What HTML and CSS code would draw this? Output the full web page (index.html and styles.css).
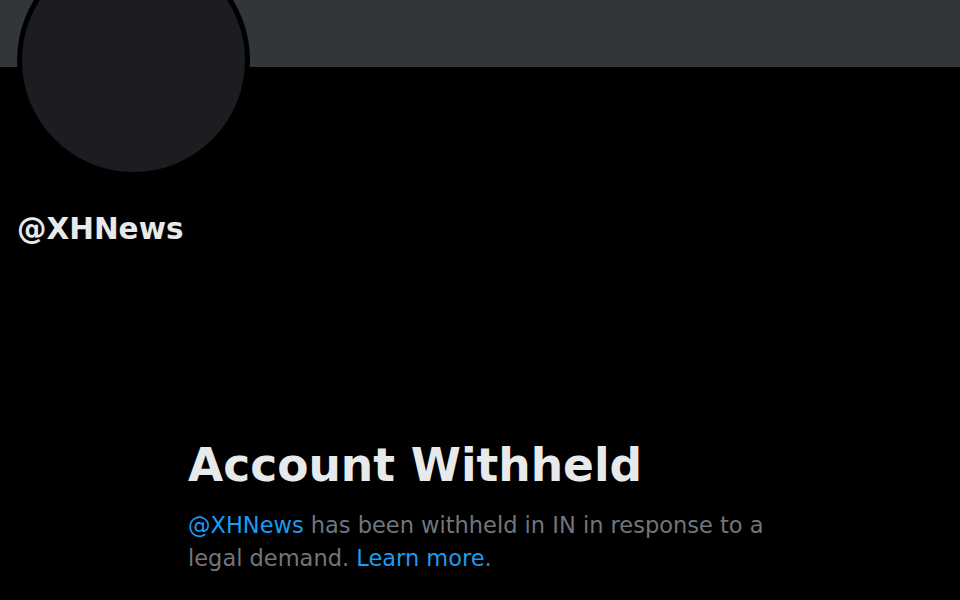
FILE: index.html
```html
<!DOCTYPE html>
<html lang="en">
<head>
<meta charset="utf-8">
<title>@XHNews</title>
<link rel="stylesheet" href="styles.css">
</head>
<body>
<div class="page">
  <div class="banner"></div>
  <div class="profile">
    <div class="avatar"></div>
    <div class="handle">@XHNews</div>
  </div>
  <div class="notice">
    <h1 class="notice-title">Account Withheld</h1>
    <p class="notice-text"><a class="link" href="#">@XHNews</a> has been withheld in IN in response to a legal demand. <a class="link" href="#">Learn more</a>.</p>
  </div>
</div>
</body>
</html>
```

FILE: styles.css
```css
html, body {
  margin: 0;
  padding: 0;
  background: #000;
  height: 100%;
  overflow: hidden;
}
.page {
  font-family: "DejaVu Sans", "Liberation Sans", sans-serif;
  color: #e7e9ea;
}
.banner {
  height: 67px;
  background: #333639;
}
.profile {
  padding-left: 17px;
}
.avatar {
  width: 223px;
  height: 223px;
  border: 5px solid #000;
  border-radius: 50%;
  background: #1b1d21;
  margin-top: -123px;
}
.handle {
  margin-top: 35px;
  font-size: 29.5px;
  font-weight: bold;
  line-height: 34px;
  color: #e7e9ea;
}
.notice {
  padding-left: 188px;
  margin-top: 193px;
}
.notice-title {
  margin: 0;
  font-size: 45.5px;
  line-height: 54px;
  font-weight: bold;
  color: #e7e9ea;
}
.notice-text {
  margin: 16px 0 0;
  font-size: 22.5px;
  line-height: 33px;
  color: #71767b;
  width: 620px;
}
.link {
  color: #1d9bf0;
  text-decoration: none;
}
```
